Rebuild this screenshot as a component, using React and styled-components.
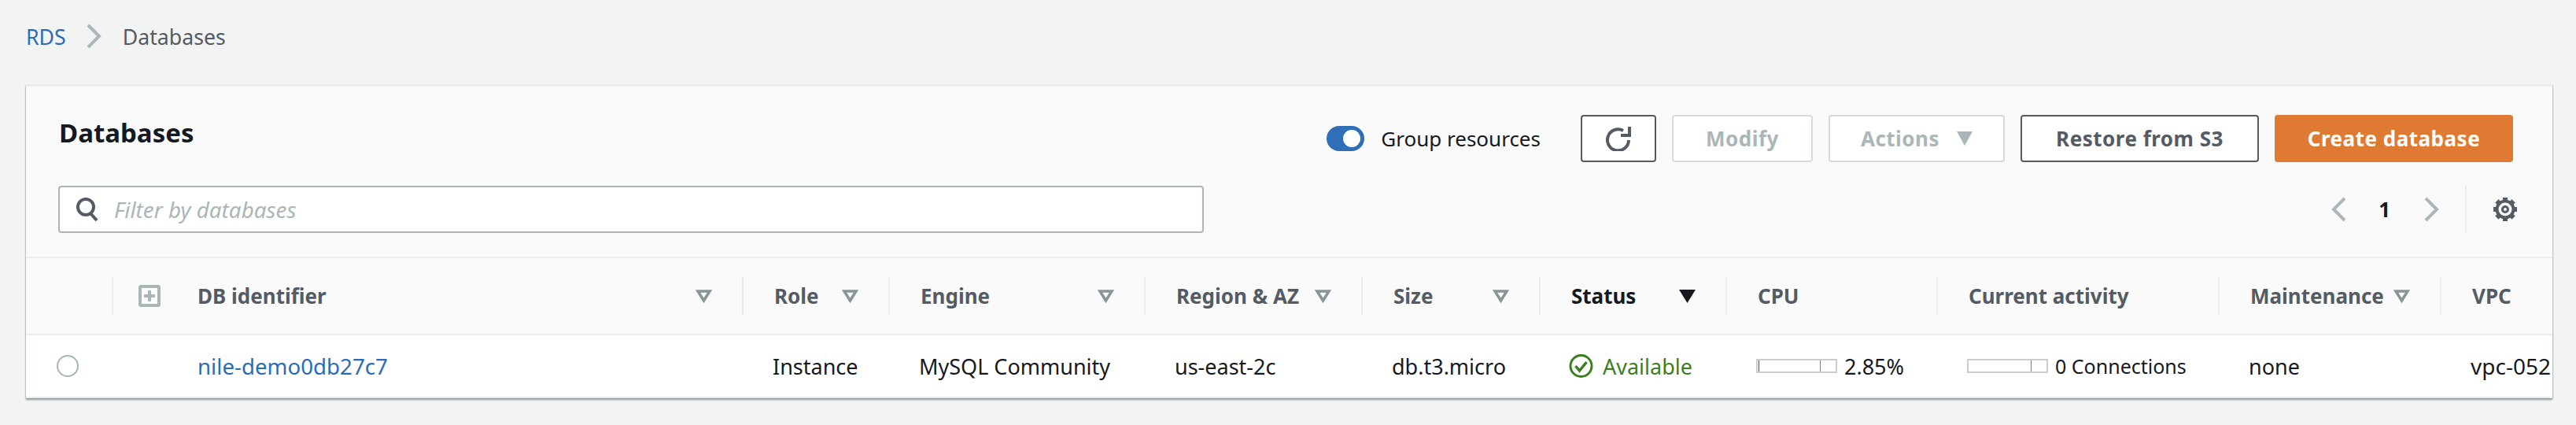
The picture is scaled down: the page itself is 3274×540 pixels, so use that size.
import React from "react";
import styled, { createGlobalStyle } from "styled-components";

const GlobalStyle = createGlobalStyle`
	html, body {
		margin: 0;
		background: #f2f3f3;
		font-family: "Noto Sans", "Open Sans", sans-serif;
		color: #16191f;
	}
`

const Page = styled.div`
	width: 3274px;
	height: 540px;
	overflow: hidden;
	box-sizing: border-box;
	padding: 26px 30px 0 33px;
`

const Breadcrumbs = styled.nav`
	display: flex;
	align-items: center;
	height: 40px;
	margin-bottom: 42px;
	font-size: 26.7px;
	color: #545b64;
	svg {
		margin: 0 27px 0 26px;
	}
`

const Link = styled.a`
	color: #2b6cb5;
	text-decoration: none;
`

const NameLink = styled(Link)`
	font-size: 27.7px;
`

const Panel = styled.section`
	background: #fafafa;
	border-top: 2px solid #eaeded;
	box-shadow: 0 2px 2px #8a9696, -1px 0 1px #d5dbdb, 1px 0 1px #d5dbdb;
	overflow: hidden;
`

const Toolbar = styled.div`
	display: flex;
	align-items: center;
	justify-content: space-between;
	padding: 36px 50px 0 42px;
	height: 60px;
`

const Title = styled.h1`
	margin: -16px 0 0;
	font-size: 33px;
	font-weight: 700;
`

const Actions = styled.div`
	display: flex;
	align-items: center;
	gap: 20px;
`

const ToggleGroup = styled.label`
	display: flex;
	align-items: center;
	gap: 21px;
	margin-right: 31px;
	font-size: 26px;
`

const Toggle = styled.span`
	position: relative;
	width: 48px;
	height: 32px;
	border-radius: 16px;
	background: #2e6fb7;
	&::after {
		content: "";
		position: absolute;
		top: 5px;
		right: 5px;
		width: 22px;
		height: 22px;
		border-radius: 50%;
		background: #fff;
	}
`

const Button = styled.button`
	display: flex;
	align-items: center;
	justify-content: center;
	gap: 22px;
	box-sizing: border-box;
	height: 60px;
	width: ${(p) => p.$width}px;
	padding: 0;
	border: 2px solid ${(p) => (p.$disabled ? "#d5dbdb" : "#545b64")};
	border-radius: 4px;
	background: #fff;
	color: ${(p) => (p.$disabled ? "#aab7b8" : "#545b64")};
	font-family: inherit;
	font-size: 26px;
	font-weight: 700;
	letter-spacing: 0.5px;
`

const PrimaryButton = styled(Button)`
	border-color: #df7a33;
	background: #df7a33;
	color: #fff;
`

const FilterRow = styled.div`
	display: flex;
	align-items: center;
	justify-content: space-between;
	padding: 30px 44px 30px 41px;
`

const Filter = styled.div`
	display: flex;
	align-items: center;
	gap: 19px;
	box-sizing: border-box;
	width: 1456px;
	height: 60px;
	padding: 0 18px 0 20px;
	border: 2px solid #aab7b8;
	border-radius: 4px;
	background: #fff;
	color: #aab7b8;
	font-size: 27.8px;
	font-style: italic;
`

const Pagination = styled.div`
	display: flex;
	align-items: center;
	height: 60px;
	font-size: 26px;
	font-weight: 700;
`

const PageNumber = styled.span`
	margin: 0 43px 0 41px;
`

const Settings = styled.span`
	display: flex;
	align-items: center;
	height: 60px;
	margin-left: 33px;
	padding-left: 33px;
	border-left: 2px solid #eaeded;
`

const Row = styled.div`
	display: grid;
	grid-template-columns: 109px 801px 186px 325px 276px 226px 237px 268px 358px 282px 143px;
	align-items: center;
`

const HeadRow = styled(Row)`
	height: 96px;
	border-top: 2px solid #eaeded;
	border-bottom: 2px solid #eaeded;
`

const BodyRow = styled(Row)`
	height: 78px;
	background: #fff;
	border-bottom: 2px solid #eaeded;
	font-size: 27px;
`

const HeadCell = styled.div`
	display: flex;
	align-items: center;
	justify-content: space-between;
	box-sizing: border-box;
	height: 48px;
	padding: 0 38px 0 ${(p) => p.$left || 39}px;
	border-left: ${(p) => (p.$plain ? "0" : "2px solid #eaeded")};
	color: ${(p) => (p.$active ? "#16191f" : "#545b64")};
	font-size: 26px;
	font-weight: 700;
	white-space: nowrap;
`

const HeadLabel = styled.span`
	display: flex;
	align-items: center;
	gap: 47px;
`

const Cell = styled.div`
	display: flex;
	align-items: center;
	gap: ${(p) => p.$gap || 0}px;
	padding-left: ${(p) => p.$left || 39}px;
	white-space: nowrap;
`

const Radio = styled.span`
	box-sizing: border-box;
	width: 28px;
	height: 28px;
	border: 2px solid #aab7b8;
	border-radius: 50%;
`

const StatusText = styled.span`
	color: #3b7f1f;
`

const ActivityText = styled.span`
	font-size: 25px;
`

const VpcText = styled.span`
	font-size: 28px;
`

const Bar = styled.span`
	position: relative;
	box-sizing: border-box;
	width: 103px;
	height: 18px;
	border: 2px solid #ccc;
	background: #fff;
	&::before {
		content: "";
		position: absolute;
		top: 0;
		bottom: 0;
		left: 1px;
		width: 1px;
		background: ${(p) => p.$fill};
	}
	&::after {
		content: "";
		position: absolute;
		top: 0;
		bottom: 0;
		right: 19px;
		width: 1px;
		background: #d0605e;
	}
`

const SortIcon = ({ active }) => (
	<svg width="21" height="17" viewBox="0 0 21 17">
		{active
			? <path d="M0 0h21L10.500 17z" fill="#16191f" />
			: <path d="M3 2h15L10.500 14z" fill="none" stroke="#879596" strokeWidth="3.500" />}
	</svg>
)

const RefreshIcon = () => (
	<svg width="32" height="32" viewBox="0 0 32 32" fill="none" stroke="#545b64" strokeWidth="4">
		<path d="M29 18A13.500 13.500 0 1 1 22 6" />
		<path d="M30 1v11H19" />
	</svg>
)

const SearchIcon = () => (
	<svg width="30" height="30" viewBox="0 0 30 30" fill="none" stroke="#545b64" strokeWidth="4">
		<circle cx="13" cy="12" r="10" />
		<path d="M19 20l8 9" />
	</svg>
)

const Chevron = ({ color }) => (
	<svg width="19" height="32" viewBox="0 0 19 32" fill="none" stroke={color} strokeWidth="4">
		<path d="M2 2l14 14L2 30" />
	</svg>
)

const ChevronLeft = ({ color }) => (
	<svg width="19" height="32" viewBox="0 0 19 32" fill="none" stroke={color} strokeWidth="4">
		<path d="M17 2L3 16l14 14" />
	</svg>
)

const GearIcon = () => (
	<svg width="32" height="32" viewBox="0 0 32 32" fill="none" stroke="#545b64">
		<circle cx="16" cy="16" r="10.500" strokeWidth="4" />
		<circle cx="16" cy="16" r="3.500" strokeWidth="3" />
		<path d="M16 1v5M16 26v5M1 16h5M26 16h5M5.400 5.400l3.500 3.500M23.100 23.100l3.500 3.500M5.400 26.600l3.500-3.500M23.100 8.900l3.500-3.500" strokeWidth="6" />
	</svg>
)

const PlusBox = () => (
	<svg width="28" height="28" viewBox="0 0 28 28">
		<rect x="2" y="2" width="24" height="24" rx="1" fill="#fff" stroke="#aab7b8" strokeWidth="4" />
		<path d="M14 7v14M7 14h14" stroke="#aab7b8" strokeWidth="4" />
	</svg>
)

const CheckCircle = () => (
	<svg width="31" height="32" viewBox="0 0 31 32" fill="none" stroke="#3b7f1f" strokeWidth="3">
		<circle cx="15.500" cy="16" r="13.500" />
		<path d="M8.500 16l5 6 9-11" strokeWidth="3.500" />
	</svg>
)

const columns = [
	{ label: "Role", sort: true },
	{ label: "Engine", sort: true },
	{ label: "Region & AZ", sort: true },
	{ label: "Size", sort: true },
	{ label: "Status", sort: true, active: true },
	{ label: "CPU" },
	{ label: "Current activity" },
	{ label: "Maintenance", sort: true },
	{ label: "VPC" },
]

const App = () => {
	return (
		<Page>
			<GlobalStyle />
			<Breadcrumbs>
				<Link>RDS</Link>
				<Chevron color="#aab7b8" />
				<span>Databases</span>
			</Breadcrumbs>
			<Panel>
				<Toolbar>
					<Title>Databases</Title>
					<Actions>
						<ToggleGroup>
							<Toggle />
							Group resources
						</ToggleGroup>
						<Button $width={96}><RefreshIcon /></Button>
						<Button $width={179} $disabled>Modify</Button>
						<Button $width={224} $disabled>
							Actions
							<svg width="20" height="18" viewBox="0 0 20 18"><path d="M0 0h20L10 18z" fill="#aab7b8" /></svg>
						</Button>
						<Button $width={303}>Restore from S3</Button>
						<PrimaryButton $width={303}>Create database</PrimaryButton>
					</Actions>
				</Toolbar>
				<FilterRow>
					<Filter>
						<SearchIcon />
						Filter by databases
					</Filter>
					<Pagination>
						<ChevronLeft color="#aab7b8" />
						<PageNumber>1</PageNumber>
						<Chevron color="#aab7b8" />
						<Settings><GearIcon /></Settings>
					</Pagination>
				</FilterRow>
				<HeadRow>
					<HeadCell $plain />
					<HeadCell $left={32}>
						<HeadLabel><PlusBox /><span>DB identifier</span></HeadLabel>
						<SortIcon />
					</HeadCell>
					{columns.map((col) => (
						<HeadCell key={col.label} $active={col.active}>
							{col.label}
							{col.sort && <SortIcon active={col.active} />}
						</HeadCell>
					))}
				</HeadRow>
				<BodyRow>
					<Cell><Radio /></Cell>
					<Cell $left={109}><NameLink>nile-demo0db27c7</NameLink></Cell>
					<Cell>Instance</Cell>
					<Cell>MySQL Community</Cell>
					<Cell>us-east-2c</Cell>
					<Cell>db.t3.micro</Cell>
					<Cell $left={38} $gap={12}><CheckCircle /><StatusText>Available</StatusText></Cell>
					<Cell $gap={9}><Bar $fill="#2b4f8f" />2.85%</Cell>
					<Cell $gap={9}><Bar $fill="transparent" /><ActivityText>0 Connections</ActivityText></Cell>
					<Cell>none</Cell>
					<Cell><VpcText>vpc-052</VpcText></Cell>
				</BodyRow>
			</Panel>
		</Page>
	)
}

export default App
